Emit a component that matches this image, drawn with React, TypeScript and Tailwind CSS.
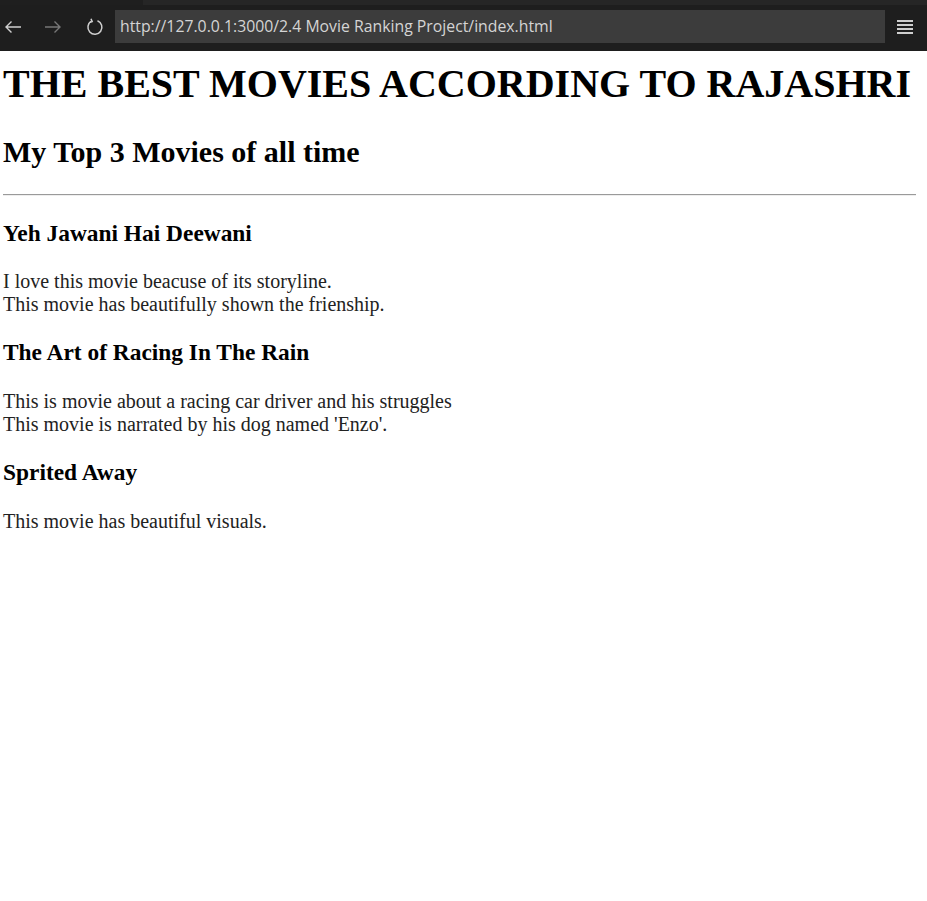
import React from "react";

const serif = { fontFamily: '"Liberation Serif", "Times New Roman", serif' };

function Movie({ title, lines }: { title: string; lines: string[] }) {
  return (
    <>
      <h3 className="text-[23.4px] leading-[27px] font-bold text-black mt-[23.4px] mb-[23.4px]">{title}</h3>
      <p className="text-[20px] leading-[23px] text-[#222]">
        {lines.map((l, i) => (
          <React.Fragment key={i}>
            {l}
            {i < lines.length - 1 && <br />}
          </React.Fragment>
        ))}
      </p>
    </>
  );
}

export default function App() {
  return (
    <div className="w-[927px] h-[901px] bg-white overflow-hidden">
      {/* Browser chrome */}
      <div className="h-[51px] bg-[#1e1e1e] relative" style={{ fontFamily: '"Segoe UI", "Open Sans", "Noto Sans", sans-serif' }}>
        <div className="flex h-[5px]">
          <div className="w-[143px] bg-[#1f1f1f]" />
          <div className="flex-1 bg-[#262626]" />
        </div>
        <div className="flex items-start h-[46px] pt-[5px]">
          <div className="flex items-center h-[33px]">
            <svg width="18" height="14" viewBox="0 0 18 14" className="ml-[4px]">
              <path d="M17 7H2M7.5 1.5L2 7l5.5 5.5" stroke="#cfcfcf" strokeWidth="1.4" fill="none" />
            </svg>
            <svg width="18" height="14" viewBox="0 0 18 14" className="ml-[22px]">
              <path d="M1 7h15M10.5 1.5L16 7l-5.5 5.5" stroke="#777" strokeWidth="1.4" fill="none" />
            </svg>
            <svg width="18" height="18" viewBox="0 0 18 18" className="ml-[24px]">
              <path d="M11.5 2.8A7 7 0 1 1 5.5 3.2" stroke="#cfcfcf" strokeWidth="1.5" fill="none" />
              <path d="M5 0.8L6.2 3.6 3.2 4.6" stroke="#cfcfcf" strokeWidth="1.5" fill="none" />
            </svg>
          </div>
          <div className="ml-[11px] w-[770px] h-[33px] bg-[#3c3c3c] flex items-center pl-[5px] text-[15.8px] text-[#d4d4d4] whitespace-nowrap">
            http://127.0.0.1:3000/2.4 Movie Ranking Project/index.html
          </div>
          <div className="flex flex-col gap-[2px] ml-[12px] mt-[10px] w-[16px]">
            <div className="h-[2px] bg-[#cfcfcf]" />
            <div className="h-[2px] bg-[#cfcfcf]" />
            <div className="h-[2px] bg-[#cfcfcf]" />
            <div className="h-[2px] bg-[#cfcfcf]" />
          </div>
        </div>
      </div>

      {/* Page */}
      <div className="pl-[3px] pr-[11px] text-black" style={serif}>
        <h1 className="text-[40px] leading-[46px] font-bold mt-[10px] mb-[27.8px]">THE BEST MOVIES ACCORDING TO RAJASHRI</h1>
        <h2 className="text-[30px] leading-[34.5px] font-bold mb-[25px]">My Top 3 Movies of all time</h2>
        <hr className="border-0 border-t border-t-[#9a9a9a] border-b border-b-[#eeeeee] h-0" />
        <Movie title="Yeh Jawani Hai Deewani" lines={["I love this movie beacuse of its storyline.", "This movie has beautifully shown the frienship."]} />
        <Movie title="The Art of Racing In The Rain" lines={["This is movie about a racing car driver and his struggles", "This movie is narrated by his dog named 'Enzo'."]} />
        <Movie title="Sprited Away" lines={["This movie has beautiful visuals."]} />
      </div>
    </div>
  );
}
